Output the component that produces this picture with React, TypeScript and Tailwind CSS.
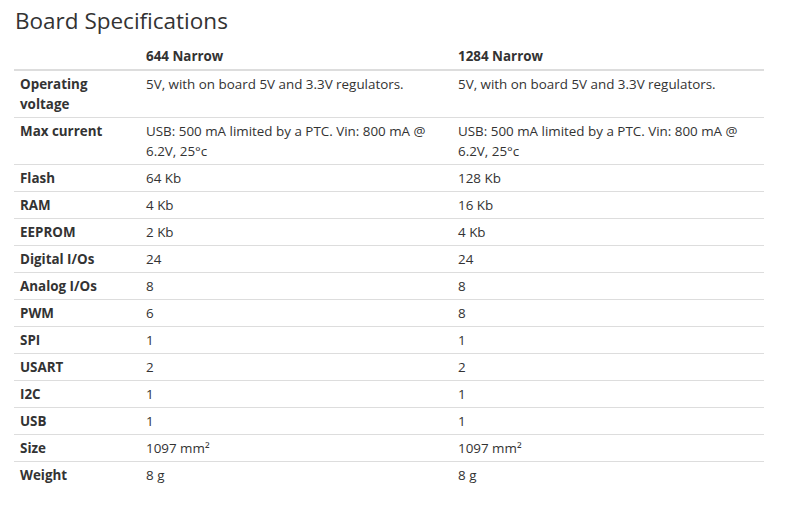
const rows: [string, React.ReactNode, React.ReactNode][] = [
  ['Operating voltage', '5V, with on board 5V and 3.3V regulators.', '5V, with on board 5V and 3.3V regulators.'],
  [
    'Max current',
    <>USB: 500 mA limited by a PTC. Vin: 800 mA @<br />6.2V, 25°c</>,
    <>USB: 500 mA limited by a PTC. Vin: 800 mA @<br />6.2V, 25°c</>,
  ],
  ['Flash', '64 Kb', '128 Kb'],
  ['RAM', '4 Kb', '16 Kb'],
  ['EEPROM', '2 Kb', '4 Kb'],
  ['Digital I/Os', '24', '24'],
  ['Analog I/Os', '8', '8'],
  ['PWM', '6', '8'],
  ['SPI', '1', '1'],
  ['USART', '2', '2'],
  ['I2C', '1', '1'],
  ['USB', '1', '1'],
  ['Size', '1097 mm²', '1097 mm²'],
  ['Weight', '8 g', '8 g'],
]

export default function App() {
  return (
    <div className="min-h-[520px] bg-white pl-[14px] pt-[8px] text-[#333] font-['Open_Sans',sans-serif]">
      <h3 className="text-[22.5px] leading-[26px] mb-[9px] ml-[1px]">Board Specifications</h3>
      <table className="w-[750px] text-[13.4px] leading-5">
        <thead>
          <tr className="border-b-2 border-[#ddd]">
            <th className="w-[126px] px-[6px] py-[3px]"></th>
            <th className="w-[312px] px-[6px] py-[3px] text-left font-bold">644 Narrow</th>
            <th className="w-[312px] px-[6px] py-[3px] text-left font-bold">1284 Narrow</th>
          </tr>
        </thead>
        <tbody>
          {rows.map(([label, a, b], i) => (
            <tr key={label} className={i < rows.length - 1 ? 'border-b border-[#ddd]' : ''}>
              <td className="px-[6px] py-[3px] align-top font-bold">
                {label === 'Operating voltage' ? <>Operating<br />voltage</> : label}
              </td>
              <td className="px-[6px] py-[3px] align-top">{a}</td>
              <td className="px-[6px] py-[3px] align-top">{b}</td>
            </tr>
          ))}
        </tbody>
      </table>
    </div>
  )
}
